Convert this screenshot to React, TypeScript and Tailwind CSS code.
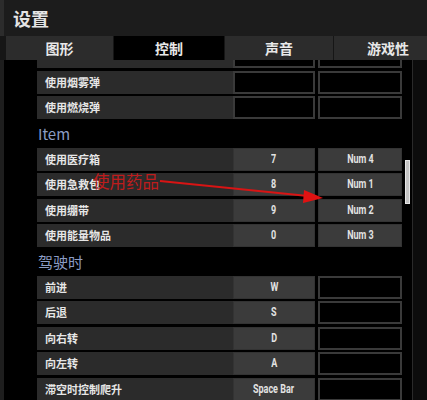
const cjk = "font-['Noto_Sans_CJK_SC','Noto_Sans',sans-serif]";
const narrow = "font-['Roboto','Liberation_Sans',sans-serif]";

type Row = { label?: string; k1?: string; k2?: string };

function KeyCell({ value, w }: { value?: string; w: string }) {
  if (!value) {
    return <div className={`${w} h-full bg-black border-2 border-[#3a3a3a]`} />;
  }
  return (
    <div className={`${w} h-full bg-[#3b3b3b] border border-[#333] flex items-center justify-center text-[12.5px] font-bold text-[#e2e2e2] ${narrow}`}>
      <span className="inline-block scale-x-[0.72] whitespace-nowrap">{value}</span>
    </div>
  );
}

function BindRow({ label, k1, k2 }: Row) {
  return (
    <div className="flex h-[23px] mb-[2.5px]">
      <div className={`w-[196px] h-full bg-[#2b2b2b] flex items-center pl-[8px] text-[11px] font-bold text-[#e6e6e6] ${cjk}`}>
        {label}
      </div>
      <KeyCell value={k1} w="w-[82px]" />
      <div className="w-[3px]" />
      <KeyCell value={k2} w="w-[84px]" />
    </div>
  );
}

function Heading({ text }: { text: string }) {
  return (
    <div className={`h-[26px] flex items-center pl-[1px] text-[15px] text-[#8b9cc4] ${cjk}`}>
      {text}
    </div>
  );
}

export default function App() {
  const tabs = [
    { name: "图形", w: "w-[107px]", active: false },
    { name: "控制", w: "w-[110px]", active: true },
    { name: "声音", w: "w-[108px]", active: false },
    { name: "游戏性", w: "w-[108px]", active: false },
  ];

  return (
    <div className={`relative w-[427px] h-[400px] overflow-hidden bg-black flex flex-col ${cjk}`}>
      {/* title */}
      <div className="h-[36px] shrink-0 bg-[#1c1c1c] border-l-4 border-[#2c2c2c] flex items-center pl-[9px]">
        <span className="text-[18px] font-bold text-[#e4e4e4]">设置</span>
      </div>

      {/* tabs */}
      <div className="h-[24px] shrink-0 bg-[#161616] flex pl-[6px] gap-[1px] overflow-hidden">
        {tabs.map((t) => (
          <div
            key={t.name}
            className={`${t.w} h-full shrink-0 flex items-center justify-center text-[14px] font-bold text-[#e8e8e8] ${t.active ? "bg-black" : "bg-[#2c2c2c]"}`}
          >
            {t.name}
          </div>
        ))}
      </div>

      {/* content */}
      <div className="flex flex-1 overflow-hidden">
        <div className="w-[37px] shrink-0 border-l-4 border-[#1e1e1e]" />
        <div className="w-[365px] shrink-0 -mt-[15px]">
          <BindRow />
          <BindRow label="使用烟雾弹" />
          <BindRow label="使用燃烧弹" />
          <Heading text="Item" />
          <BindRow label="使用医疗箱" k1="7" k2="Num 4" />
          <BindRow label="使用急救包" k1="8" k2="Num 1" />
          <BindRow label="使用绷带" k1="9" k2="Num 2" />
          <BindRow label="使用能量物品" k1="0" k2="Num 3" />
          <Heading text="驾驶时" />
          <BindRow label="前进" k1="W" />
          <BindRow label="后退" k1="S" />
          <BindRow label="向右转" k1="D" />
          <BindRow label="向左转" k1="A" />
          <BindRow label="滞空时控制爬升" k1="Space Bar" />
        </div>
        {/* scroll track */}
        <div className="w-[8px] shrink-0 ml-[3px] border-r border-[#2a2a2a] pt-[100px]">
          <div className="w-[5px] h-[44px] bg-[#c4c4c4] border border-[#e6e6e6]" />
        </div>
        <div className="flex-1 bg-[#0c0c0c]" />
      </div>

      {/* red annotation */}
      <div className="absolute left-[93px] top-[170px] text-[16.5px] leading-[22px] text-[#cf1b1b] opacity-90">
        使用药品
      </div>
      <svg className="absolute left-0 top-0" width="427" height="400" viewBox="0 0 427 400">
        <line x1="160" y1="181" x2="308" y2="196" stroke="#d81414" strokeWidth="2" />
        <polygon points="323,198 304,190 303,203" fill="#e01212" />
      </svg>
    </div>
  );
}
